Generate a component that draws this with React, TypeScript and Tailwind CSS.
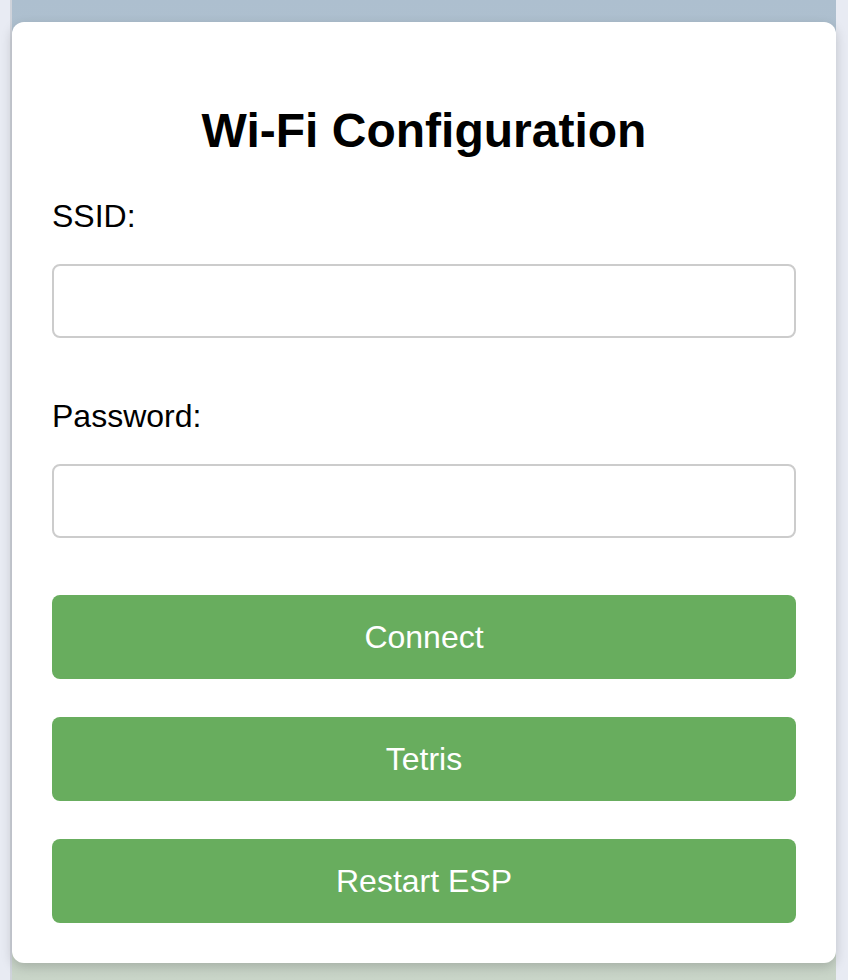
import React from "react";

const fields = [
  { id: "ssid", label: "SSID:", type: "text" },
  { id: "password", label: "Password:", type: "password" },
];

const actions = ["Connect", "Tetris", "Restart ESP"];

const App = () => {
  return (
    <div className="flex h-[980px] w-[848px] overflow-hidden bg-[#e8ebf3] font-['Liberation_Sans',Arial,sans-serif] text-black">
      <div className="w-[10px] shrink-0" />
      <div className="w-[2px] shrink-0 bg-[#cfd3db]" />
      <div className="w-[824px] shrink-0 bg-gradient-to-b from-[#adbfcf] to-[#c9d5c8] pt-[22px]">
        <div className="flex flex-col rounded-[12px] bg-white px-10 pt-[82px] pb-10 shadow-[0_4px_12px_rgba(0,0,0,0.18)]">
          <h1 className="text-center text-[48px] leading-[54px] font-bold">Wi-Fi Configuration</h1>

          {/* Form fields */}
          <div className="mt-10 flex flex-col gap-[60px]">
            {fields.map((f) => (
              <div key={f.id} className="flex flex-col gap-[30px]">
                <label htmlFor={f.id} className="text-[32px] leading-[36px]">
                  {f.label}
                </label>
                <input
                  id={f.id}
                  type={f.type}
                  className="h-[74px] w-full rounded-[8px] border-2 border-[#cccccc] bg-white px-4 text-[28px] outline-none"
                />
              </div>
            ))}
          </div>

          {/* Buttons */}
          <div className="mt-[57px] flex flex-col gap-[38px]">
            {actions.map((a) => (
              <button
                key={a}
                className="flex h-[84px] w-full items-center justify-center rounded-[8px] bg-[#68ad5e] text-[32px] text-white"
              >
                {a}
              </button>
            ))}
          </div>
        </div>
      </div>
      <div className="flex-1" />
    </div>
  );
};

export default App;
